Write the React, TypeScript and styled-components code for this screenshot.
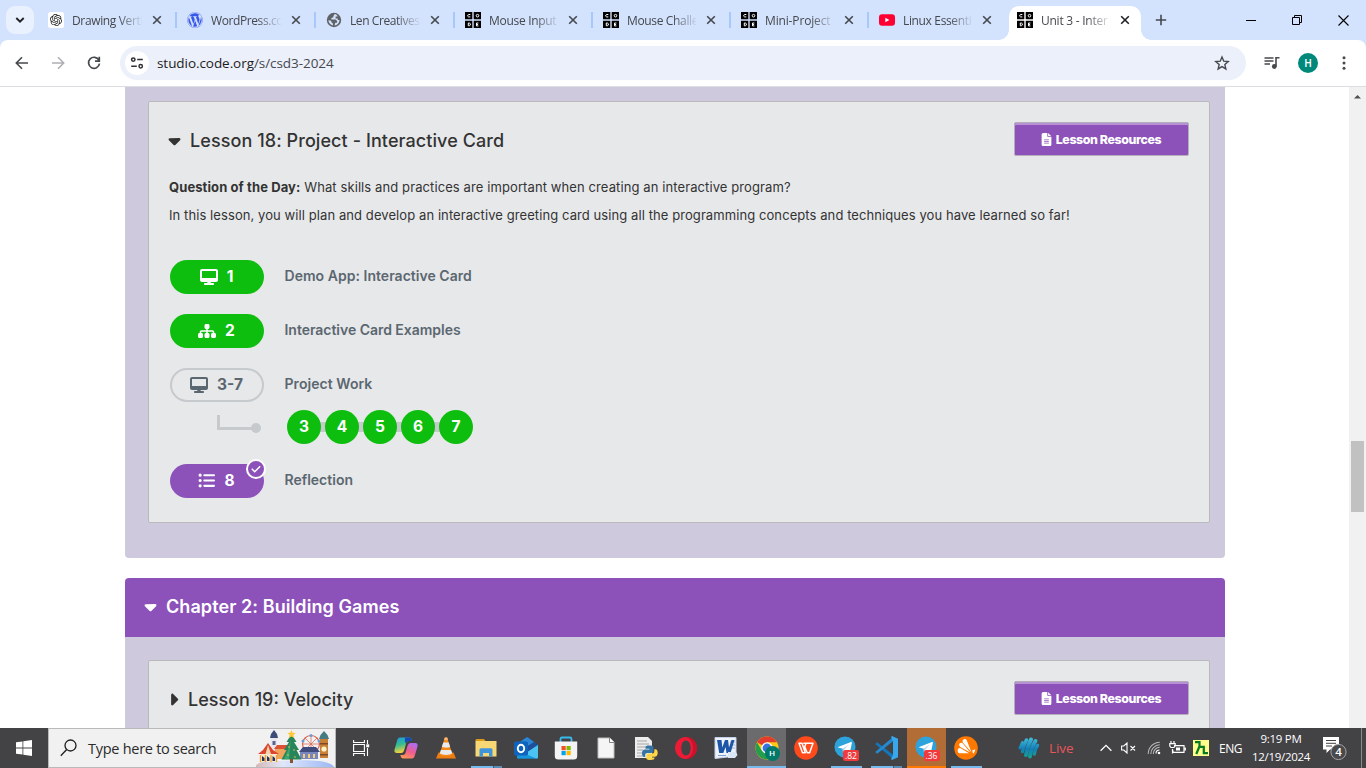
import React from "react";
import styled, { createGlobalStyle, css } from "styled-components";
import { FaWordpress } from "react-icons/fa";
import { FaDesktop, FaSitemap, FaListUl, FaFileLines, FaCaretDown, FaCaretRight } from "react-icons/fa6";
import { SiOpenai } from "react-icons/si";

const PURPLE = "#8c52ba";
const GREEN = "#0ebe0e";
const SLATE = "#5b6770";
const SYSTEM_FONT = `"Open Sans", "Noto Sans", sans-serif`;
const PAGE_FONT = `Inter, "Liberation Sans", sans-serif`;

const GlobalStyle = createGlobalStyle`
  * { box-sizing: border-box; }
  body { margin: 0; overflow: hidden; background: #fff; }
  svg { display: block; flex: none; }
`;

const Screen = styled.div`
  width: 1366px;
  height: 768px;
  display: flex;
  flex-direction: column;
  overflow: hidden;
  font-family: ${SYSTEM_FONT};
`;

/* ---------- Browser frame ---------- */

const TabStrip = styled.div`
  height: 40px;
  flex: none;
  display: flex;
  padding: 6px 0 0 6px;
  background: #d3e2fd;
`;

const TabSearch = styled.div`
  width: 28px;
  height: 28px;
  border-radius: 9px;
  background: #e9f0fe;
  display: grid;
  place-items: center;
  margin-right: 6px;
`;

const Tab = styled.div<{ $width: number; $active?: boolean }>`
  position: relative;
  width: ${(p) => p.$width}px;
  height: 34px;
  margin-right: 6px;
  padding: 0 11px 6px 8px;
  display: flex;
  align-items: center;
  flex: none;
  ${(p) =>
    p.$active
      ? css`
          margin-right: 0;
          background: #fff;
          border-radius: 10px 10px 0 0;
          &::before,
          &::after {
            content: "";
            position: absolute;
            bottom: 0;
            width: 10px;
            height: 10px;
          }
          &::before {
            left: -10px;
            background: radial-gradient(circle at 0 0, transparent 9.5px, #fff 10px);
          }
          &::after {
            right: -10px;
            background: radial-gradient(circle at 100% 0, transparent 9.5px, #fff 10px);
          }
        `
      : css`
          &::after {
            content: "";
            position: absolute;
            right: -4px;
            top: 6px;
            width: 2px;
            height: 16px;
            background: ${p.$width ? "#a8c7fa" : "transparent"};
          }
          &:nth-last-of-type(4)::after {
            background: transparent;
          }
        `}
`;

const TabTitle = styled.span<{ $spacing?: number }>`
  flex: 1;
  min-width: 0;
  margin: 1px 10px 0 8px;
  overflow: hidden;
  white-space: nowrap;
  font-size: 12px;
  line-height: 18px;
  letter-spacing: ${(p) => p.$spacing ?? 0}px;
  color: #45484d;
  mask-image: linear-gradient(90deg, #000 46px, transparent 71px);
`;

const NewTab = styled.div`
  width: 40px;
  height: 28px;
  display: grid;
  place-items: center;
`;

const WindowButtons = styled.div`
  margin-left: auto;
  display: flex;
  height: 28px;
`;

const WindowButton = styled.div`
  width: 46px;
  display: grid;
  place-items: center;
`;

const ToolbarBack = styled.div`
  flex: none;
  background: #d3e2fd;
`;

const Toolbar = styled.div`
  height: 47px;
  display: flex;
  align-items: center;
  padding: 0 4px;
  background: #fff;
  border-bottom: 1px solid #dcdde0;
  border-radius: 8px 8px 0 0;
`;

const ToolButton = styled.div`
  width: 36px;
  height: 34px;
  display: grid;
  place-items: center;
`;

const AddressBar = styled.div`
  width: 1126px;
  height: 34px;
  margin: 0 8px;
  padding: 0 16px 0 5px;
  border-radius: 17px;
  background: #ecf0fa;
  display: flex;
  align-items: center;
`;

const SiteInfo = styled.div`
  width: 24px;
  height: 24px;
  border-radius: 50%;
  background: #fff;
  display: grid;
  place-items: center;
  margin-right: 8px;
`;

const Address = styled.span`
  flex: 1;
  font-size: 13.5px;
  letter-spacing: -0.06px;
  color: #45484d;
  b {
    font-weight: 400;
    color: #1c1d20;
  }
`;

const Avatar = styled.div`
  width: 20px;
  height: 20px;
  border-radius: 50%;
  background: #00897b;
  color: #fff;
  display: grid;
  place-items: center;
  font: 500 10px Roboto, sans-serif;
`;

/* ---------- Page ---------- */

const Viewport = styled.main`
  flex: 1;
  min-height: 0;
  display: flex;
  overflow: hidden;
  background: #fff;
  font-family: ${PAGE_FONT};
`;

const Page = styled.div`
  width: 1349px;
  height: 641px;
  overflow: hidden;
  padding: 0 124px 0 125px;
`;

const ChapterBody = styled.section<{ $last?: boolean }>`
  padding: ${(p) => (p.$last ? "23px 15px 0 23px" : "14px 15px 35px 23px")};
  height: ${(p) => (p.$last ? "120px" : "471px")};
  margin-bottom: ${(p) => (p.$last ? 0 : 20)}px;
  background: #cec9dd;
  border-radius: 0 0 4px 4px;
`;

const ChapterHeader = styled.h2`
  margin: 0;
  height: 59px;
  padding: 0 19px 2px;
  display: flex;
  align-items: center;
  gap: 10px;
  background: ${PURPLE};
  color: #fff;
  border-radius: 4px 4px 0 0;
  font-size: 18px;
  font-weight: 600;
  letter-spacing: 0.08px;
`;

const LessonCard = styled.article<{ $height: number }>`
  height: ${(p) => p.$height}px;
  padding: 20px 20px 0 19px;
  border: 1px solid #b9b9bd;
  border-radius: 2px;
  background: #e7e8ea;
`;

const LessonHeader = styled.header`
  height: 34px;
  display: flex;
  align-items: center;
  justify-content: space-between;
`;

const LessonTitle = styled.h3<{ $spacing?: number }>`
  margin: 3px 0 0;
  display: flex;
  align-items: center;
  gap: 10px;
  font-size: 18px;
  font-weight: 500;
  letter-spacing: ${(p) => p.$spacing ?? 0}px;
  color: #333;
`;

const OpenCaret = styled(FaCaretDown)`
  width: 19px;
  height: 19px;
  margin: 0 -3.5px;
`;

const ClosedCaret = styled(FaCaretRight)`
  width: 19px;
  height: 19px;
  margin: 0 -5px 0 -4px;
`;

const ResourceButton = styled.button`
  width: 175px;
  height: 34px;
  padding: 0 2px 0 0;
  border: 1px solid #b3aeb9;
  border-radius: 2px;
  box-shadow: inset 0 2px 0 #b691d4;
  background: ${PURPLE};
  color: #fff;
  display: flex;
  align-items: center;
  justify-content: center;
  gap: 3px;
  font-family: ${PAGE_FONT};
  font-size: 12.4px;
  font-weight: 800;
  letter-spacing: -0.4px;
`;

const Description = styled.div`
  margin: 17px 0 31px 1px;
  display: grid;
  grid-auto-rows: 28px;
  align-items: center;
  white-space: nowrap;
  color: #333;
`;

const Paragraph = styled.p<{ $spacing: number }>`
  margin: 0;
  font-size: 13px;
  letter-spacing: ${(p) => p.$spacing}px;
  b {
    font-weight: 700;
  }
`;

const LevelRow = styled.div<{ $after?: number }>`
  display: flex;
  align-items: center;
  height: 34px;
  padding-left: 2px;
  margin-bottom: ${(p) => p.$after ?? 20}px;
`;

const Pill = styled.div<{ $kind: "done" | "open" | "survey" }>`
  position: relative;
  width: 94px;
  height: 34px;
  margin-right: 20.5px;
  padding: 0 1px 1px 0;
  border-radius: 17px;
  display: flex;
  align-items: center;
  justify-content: center;
  gap: 9px;
  font-size: 15.5px;
  font-weight: 700;
  color: ${(p) => (p.$kind === "open" ? SLATE : "#fff")};
  background: ${(p) => ({ done: GREEN, open: "transparent", survey: PURPLE })[p.$kind]};
  border: ${(p) => (p.$kind === "open" ? "2px solid #c6cacd" : "0")};
`;

const LevelName = styled.span<{ $spacing?: number }>`
  padding-bottom: 3px;
  font-size: 14px;
  font-weight: 600;
  letter-spacing: ${(p) => p.$spacing ?? 0}px;
  color: ${SLATE};
`;

const CheckBadge = styled.div`
  position: absolute;
  right: -2px;
  top: -5px;
  width: 20px;
  height: 20px;
  border-radius: 50%;
  border: 2px solid #fff;
  background: ${PURPLE};
  display: grid;
  place-items: center;
`;

const Branch = styled.div`
  width: 117px;
  padding: 0 0 6px 46px;
`;

const Bubbles = styled.div`
  display: flex;
  align-items: center;
`;

const Bubble = styled.div`
  width: 34px;
  height: 34px;
  border-radius: 50%;
  background: ${GREEN};
  color: #fff;
  display: grid;
  place-items: center;
  font-size: 15.5px;
  font-weight: 700;
  padding-bottom: 1px;
  z-index: 1;
`;

const BubbleLink = styled.div`
  width: 10px;
  height: 10px;
  margin: 0 -3px;
  background: #c6cacd;
`;

const ScrollBar = styled.div`
  width: 17px;
  flex: none;
  background: #f1f1f1;
  display: flex;
  flex-direction: column;
  align-items: center;
  padding-top: 7px;
`;

const ScrollThumb = styled.div`
  width: 13px;
  height: 71px;
  margin-top: 342px;
  background: #c1c1c1;
`;

/* ---------- Taskbar ---------- */

const TaskBar = styled.footer`
  height: 40px;
  flex: none;
  display: flex;
  background: #434245;
  color: #fff;
`;

const StartButton = styled.div`
  width: 48px;
  display: grid;
  place-items: center;
`;

const SearchBox = styled.div`
  width: 288px;
  height: 40px;
  padding-left: 11px;
  display: flex;
  align-items: center;
  background: #f1f1f1;
  border: 1px solid #b9b9b9;
  color: #2b2b2b;
  font-size: 14.5px;
  letter-spacing: -0.27px;
`;

const SearchLabel = styled.span`
  width: 168px;
  margin-left: 11px;
  flex: none;
  white-space: nowrap;
`;

const TaskSlot = styled.div<{ $width?: number; $tint?: string; $line?: "open" | "multi" | "active" | "alert" }>`
  width: ${(p) => p.$width ?? 40}px;
  display: grid;
  place-items: center;
  flex: none;
  padding-bottom: 1px;
  background: ${(p) => {
    const base = p.$tint ?? "transparent";
    if (p.$line === "open") return `linear-gradient(#76b9ed, #76b9ed) 5px 38px / 31px 2px no-repeat`;
    if (p.$line === "multi")
      return `linear-gradient(90deg, #76b9ed 22px, #3e5a73 22px, #3e5a73 23px, #5a8db4 23px) 5px 38px / 31px 2px no-repeat`;
    if (p.$line === "active") return `linear-gradient(#76b9ed, #76b9ed) 0 38px / 40px 2px no-repeat, ${base}`;
    if (p.$line === "alert") return `linear-gradient(#ff7800, #ff7800) 0 38px / 40px 2px no-repeat, ${base}`;
    return base;
  }};
  ${(p) => p.$tint && "border-left: 1px solid #434245;"}
`;

const IconStack = styled.div`
  position: relative;
  width: 24px;
  height: 24px;
`;

const CountBadge = styled.span`
  position: absolute;
  left: 9px;
  top: 14px;
  width: 16px;
  height: 11px;
  border-radius: 2px;
  background: #f03a3e;
  color: #fff;
  font-size: 8.5px;
  line-height: 11px;
  text-align: center;
`;

const ProfileBadge = styled.span`
  position: absolute;
  left: 10px;
  top: 10px;
  width: 15px;
  height: 15px;
  border-radius: 50%;
  background: #00796b;
  color: #fff;
  font: 500 8px/15px Roboto, sans-serif;
  text-align: center;
`;

const Tray = styled.div`
  margin-left: auto;
  width: 348px;
  display: flex;
  align-items: center;
`;

const Live = styled.span`
  width: 47px;
  margin-left: 9px;
  font-size: 13.5px;
  letter-spacing: -0.1px;
  color: #e8565c;
`;

const TrayItem = styled.div<{ $width: number }>`
  width: ${(p) => p.$width}px;
  display: grid;
  place-items: center;
  flex: none;
`;

const Language = styled.span`
  width: 33px;
  text-align: center;
  font-size: 12px;
  letter-spacing: -0.4px;
`;

const Clock = styled.div`
  width: 68px;
  text-align: center;
  font-size: 11.5px;
  line-height: 18px;
  letter-spacing: -0.3px;
  white-space: nowrap;
`;

const ShowDesktop = styled.div`
  width: 5px;
  height: 40px;
  margin-left: auto;
  border-left: 1px solid #8a898b;
`;

/* ---------- Icons ---------- */

const Cross = ({ color = "#45484d" }: { color?: string }) => (
  <svg width="10" height="10" viewBox="0 0 10 10" stroke={color} strokeWidth="1.6">
    <path d="M1.2 1.2l7.6 7.6M8.8 1.2L1.2 8.8" />
  </svg>
);

const CodeIcon = () => (
  <svg width="16" height="16" viewBox="0 0 16 16" fill="none">
    <path d="M0 0h7.300v7.300H0zM8.700 0H16v7.300H8.700zM0 8.700h7.300V16H0zM8.700 8.700H16V16H8.700z" fill="#000" />
    <g stroke="#fff" strokeWidth="1">
      <path d="M5.300 2.500H3.600l-.8.6v1.200l.8.600h1.700M3.300 11v2.800h1l1-.7v-1.400l-1-.7zM13.400 11h-1.900v2.900h1.900M11.500 12.450h1.600" />
      <circle cx="12.500" cy="3.700" r="1.300" />
    </g>
  </svg>
);

const GptIcon = () => (
  <svg width="16" height="16" viewBox="0 0 16 16">
    <rect width="16" height="16" rx="2.500" fill="#fff" />
    <SiOpenai x="2" y="2" size={12} color="#222" />
  </svg>
);

const GlobeIcon = () => (
  <svg width="16" height="16" viewBox="0 0 16 16">
    <circle cx="8" cy="8" r="7.200" fill="#5f6368" />
    <path d="M8.800 2.100L7.400 4v1.300L5.400 6v1.500h4.200l1.500 1.500v1.800H9.300l-.8 2.700c2.600-.2 5-2.500 5-5.500h-1.800V6.500H9.600V4.600h2.100c-.6-1.400-1.700-2.200-2.900-2.500zM2.400 8.300c.1 2.500 2 4.700 4.500 5.200v-1.900L5.200 10V8.800z" fill="#d3e2fd" />
  </svg>
);

const YoutubeIcon = () => (
  <svg width="16" height="16" viewBox="0 0 16 16">
    <rect y="2.300" width="16" height="11.400" rx="3" fill="#ff0033" />
    <path d="M6.300 5.700v4.600L10.400 8z" fill="#fff" />
  </svg>
);

const BackIcon = ({ color, flip }: { color: string; flip?: boolean }) => (
  <svg width="16" height="16" viewBox="0 0 16 16" fill="none" stroke={color} strokeWidth="1.6">
    <path d={flip ? "M2 8h11.500M8 2.300L13.700 8 8 13.700" : "M14 8H2.500M8 2.300L2.300 8 8 13.700"} />
  </svg>
);

const ReloadIcon = () => (
  <svg width="16" height="16" viewBox="0 0 16 16" fill="none" stroke="#45484d" strokeWidth="1.700">
    <path d="M12.900 5.100A5.500 5.500 0 1 0 13.500 8.700M13.300 1.800v4.300H9" />
  </svg>
);

const TuneIcon = () => (
  <svg width="14" height="14" viewBox="0 0 14 14" fill="none" stroke="#2f3135" strokeWidth="1.500">
    <circle cx="3.300" cy="3.600" r="1.700" />
    <circle cx="10.700" cy="10.200" r="1.700" />
    <path d="M7.200 3.600h5.600M1.200 10.200h5.600" />
  </svg>
);

const StarIcon = () => (
  <svg width="16" height="16" viewBox="0 0 16 16" fill="none" stroke="#45484d" strokeWidth="1.400">
    <path d="M8 2l1.750 4.150 4.500.4-3.400 3 1 4.400L8 11.600l-3.850 2.350 1-4.400-3.400-3 4.500-.4z" />
  </svg>
);

const MediaIcon = () => (
  <svg width="16" height="14" viewBox="0 0 16 14" fill="none" stroke="#45484d" strokeWidth="1.600">
    <path d="M.5 2h9M.5 5h9M.5 8h5.500M12 10.500V1.800h3.500" />
    <circle cx="10.300" cy="10.500" r="2.400" fill="#45484d" stroke="none" />
  </svg>
);

const WindowsLogo = () => (
  <svg width="16" height="16" viewBox="0 0 16 16" fill="#fff">
    <path d="M0 2.300l6.500-.9v6.200H0zM7.300 1.300L16 0v7.600H7.300zM0 8.400h6.500v6.200L0 13.700zM7.300 8.400H16V16l-8.700-1.300z" />
  </svg>
);

const FairIllustration = () => (
  <svg width="80" height="38" viewBox="1 0 80 38">
    <defs>
      <linearGradient id="snow" x2="1">
        <stop stopColor="#d6b7b4" />
        <stop offset=".35" stopColor="#dfe7fb" />
        <stop offset="1" stopColor="#9db8f5" />
      </linearGradient>
    </defs>
    <path d="M0 38c2-6 14-6 25-6 22-1 50-2 54 6z" fill="url(#snow)" />
    <g fill="none" stroke="#d9624c" strokeWidth="1.200">
      <circle cx="56" cy="15" r="8.500" />
      <path d="M56 6v18M47 15h18M50 9l12 12M62 9L50 21" strokeWidth=".7" />
    </g>
    <g fill="#6b9bd8">
      <circle cx="56" cy="6.500" r="1.500" /><circle cx="64" cy="12" r="1.500" /><circle cx="48" cy="12" r="1.500" />
    </g>
    <path d="M16 9h6v17h-6z" fill="#e8e6ee" />
    <path d="M15 9l1-4 3-4 3 4 1 4z" fill="#3d4c78" />
    <path d="M17.500 12h3v4h-3z" fill="#59658c" />
    <path d="M20 18h15v12H20z" fill="#f0a45c" />
    <path d="M19 20l3-4h12l3 4z" fill="#dd5135" />
    <path d="M45 22h18v8H45z" fill="#7986bd" />
    <path d="M44 23l4-5h13l4 5z" fill="#3f4a7d" />
    <path d="M48 25h2v4h-2zM53 25h2v4h-2zM58 25h2v4h-2z" fill="#f4cf79" />
    <path d="M65 9h8v20h-8z" fill="#c88036" />
    <path d="M64 10l1.500-4 3.500-4 3.500 4 1.500 4z" fill="#467b82" />
    <circle cx="69" cy="20" r="2.600" fill="#fff1c7" />
    <path d="M65 14h8v1.500h-8zM65 25h8v1.500h-8z" fill="#7c4829" />
    <path d="M6 25h16v8H6z" fill="#f7ead2" />
    <path d="M3 25l5-4 5-7 5 7 6 4z" fill="#dc4530" />
    <path d="M10.500 25l2.500-9 3 9z" fill="#f5d4a7" />
    <path d="M5.500 26v7M10.500 26v7M16 26v7M21.500 26v7" stroke="#f0a23a" strokeWidth="1.400" />
    <path d="M7 27l2.500 2v3H7zM12 27l2.500 2v3H12zM17.500 27l2.500 2v3h-2.500z" fill="#24305e" />
    <path d="M36.500 5l5 8h-2.500l5 8h-2.500l5 9.500H26.500l5-9.500H29l5-8h-2.500z" fill="#26855a" />
    <path d="M36 10l-2 20h-5l4-9z" fill="#3aa66b" />
    <path d="M35 30h3v4h-3z" fill="#85552d" />
    <path d="M36.500 1l1.200 2.800 3 .2-2.300 2 .8 3-2.700-1.600L33.800 9l.8-3-2.300-2 3-.2z" fill="#ffc83b" />
    <g fill="#e9c15a">
      <circle cx="34" cy="18" r=".8" /><circle cx="39" cy="21" r=".8" /><circle cx="33" cy="26" r=".8" /><circle cx="40" cy="28" r=".8" />
    </g>
  </svg>
);

const TaskViewIcon = () => (
  <svg width="17" height="16" viewBox="0 0 17 16" fill="none" stroke="#fff" strokeWidth="1.100">
    <path d="M.6 0v2.500h10.800V0M.6 4.500h10.800v7H.6zM.6 16v-2.500h10.800V16M14.500 0v4M14.500 8v8" />
    <path d="M13.200 4.300h3v3h-3z" fill="#fff" stroke="none" />
  </svg>
);

const CopilotIcon = () => (
  <svg width="24" height="24" viewBox="0 0 24 24">
    <defs>
      <linearGradient id="copA" x2=".3" y2="1">
        <stop stopColor="#1b9be8" /><stop offset=".5" stopColor="#35bd8f" /><stop offset="1" stopColor="#ffd13c" />
      </linearGradient>
      <linearGradient id="copB" x1=".7" x2=".2" y2="1">
        <stop stopColor="#b06cf0" /><stop offset=".5" stopColor="#ef5d8d" /><stop offset="1" stopColor="#ff9a52" />
      </linearGradient>
    </defs>
    <path d="M6 1.500h9c2 0 2.500 1 3.200 3.500h-3.500c-1.700 0-2.200 1-2.700 2.700l-1.700 6c-.6 2-1.500 3.300-3.500 3.300H3c-2.400 0-3-1.500-2.400-3.800L3 5c.6-2 1.300-3.500 3-3.500z" fill="url(#copA)" />
    <path d="M11 1.500h4c2 0 2.500 1 3.200 3.500h-3.500C13 5 12.500 6 12 7.700L10.800 5z" fill="#1748b8" />
    <path d="M18 22.500H9.500c-2 0-2.500-1-3.200-3.500H9c1.700 0 2.200-1 2.700-2.700l1.700-6c.6-2 1.500-3.300 3.500-3.300H21c2.400 0 3 1.500 2.400 3.800L21 19c-.6 2-1.300 3.500-3 3.500z" fill="url(#copB)" />
  </svg>
);

const VlcIcon = () => (
  <svg width="22" height="24" viewBox="0 0 22 24">
    <path d="M3.500 16.500h15l2.500 6H1z" fill="#ef7c10" />
    <path d="M9.800 1.500h2.400l5.300 17.300c-3 2.300-10 2.300-13 0z" fill="#f58a1c" />
    <path d="M8.300 6.500h5.400l1.400 4.300c-2 1.200-6.200 1.200-8.200 0zM5.900 14h10.200l1.100 3.600c-3 1.800-9.400 1.800-12.400 0z" fill="#e9eaec" />
    <path d="M9.800 1.500h2.400l.8 2.500H9z" fill="#f7b77b" />
  </svg>
);

const FolderIcon = () => (
  <svg width="24" height="24" viewBox="0 0 24 24">
    <path d="M1.500 4.500c0-1 .5-1.500 1.500-1.500h7l1.500 2h-10z" fill="#d99a18" />
    <path d="M1.500 5h21v15.500h-21z" fill="#f8d775" />
    <path d="M5.500 20.500V14c0-1 .6-1.700 1.600-1.700h9.800c1 0 1.600.7 1.600 1.700v6.500h-3.500V17H9v3.500z" fill="#3f95dc" />
  </svg>
);

const OutlookIcon = () => (
  <svg width="26" height="24" viewBox="0 0 26 24">
    <path d="M4 9l11-7.500L25 9v12c0 1-.7 1.500-1.500 1.500h-18C4.500 22.500 4 22 4 21z" fill="#1a7fd0" />
    <path d="M14 1.500h1L25 9l-9 7-8-7z" fill="#1d4f9c" />
    <path d="M6 6.500l8-5.500 7 5-8 5z" fill="#2b86d6" />
    <path d="M25 9v12c0 1-.5 1.500-1.500 1.500L8 20z" fill="#4bc4f2" />
    <path d="M4 14l19 8.500H5.500C4.500 22.500 4 22 4 21z" fill="#1698dc" />
    <rect x="1" y="5.500" width="14" height="14" rx="1.500" fill="#0f63bd" />
    <ellipse cx="8" cy="12.500" rx="3.200" ry="3.700" fill="none" stroke="#fff" strokeWidth="1.900" />
  </svg>
);

const StoreIcon = () => (
  <svg width="24" height="24" viewBox="0 0 24 24">
    <path d="M6.500 6V3c0-1 .5-1.500 1.500-1.500h8c1 0 1.500.5 1.500 1.500v3" fill="none" stroke="#38b9ee" strokeWidth="1.800" />
    <path d="M.8 5.500h22.400V20c0 2.500-1 3.500-3.500 3.500H4.300C1.800 23.500.8 22.500.8 20z" fill="#f4f4f5" />
    <path d="M7.500 10h4.200v4.200H7.500z" fill="#f25022" />
    <path d="M12.500 10h4.200v4.200h-4.200z" fill="#7fba00" />
    <path d="M7.500 15h4.200v4.200H7.500z" fill="#00a4ef" />
    <path d="M12.500 15h4.200v4.200h-4.200z" fill="#ffb900" />
  </svg>
);

const FileIcon = () => (
  <svg width="18" height="24" viewBox="0 0 18 24">
    <path d="M1 2h12l4 4v16H1z" fill="#f5f5f5" stroke="#bdbdbd" />
    <path d="M12.500 2v4.500H17" fill="#fff" stroke="#858585" />
  </svg>
);

const PythonIcon = () => (
  <svg width="26" height="24" viewBox="0 0 26 24">
    <path d="M2 1h13l4 4v17H2z" fill="#ededed" />
    <path d="M4 5h10M4 8h12M4 11h9M4 14h6M4 17h5M4 20h6" stroke="#a5a5a5" />
    <path d="M16 9.500c3 0 4.500.3 4.500 2.200v3.100c0 1.500-1 2.200-2.500 2.200h-3.500c-1.500 0-2.300.8-2.300 2.200V21h-.9c-1.500 0-2.300-1.500-2.300-3.800 0-2.400 1.200-3.600 3-3.600h4.500v-.8h-4v-1.300c0-1.500 1-2 3.500-2z" fill="#3673a5" />
    <path d="M17.500 24c-3 0-4.200-.6-4.200-2v-2.500c0-1.300.8-2 2.200-2H19c1.500 0 2.300-.8 2.300-2.200v-2h1c1.700 0 2.400 1.500 2.400 3.800 0 2.400-1.200 3.600-3 3.600h-4v.8h3.800v.6c0 1.500-1.200 1.900-4 1.900z" fill="#ffd545" />
  </svg>
);

const OperaIcon = () => (
  <svg width="24" height="24" viewBox="0 0 24 24">
    <path fillRule="evenodd" d="M12 1a11 11 0 1 0 0 22 11 11 0 1 0 0-22zm0 3.500c3 0 4.700 3.500 4.700 7.500s-1.700 7.500-4.700 7.500S7.300 16 7.300 12 9 4.500 12 4.500z" fill="#ed1b35" />
    <path d="M12 1a11 11 0 0 1 0 22c2-.4 7-4 7-11S14 1.400 12 1z" fill="#b90d27" opacity=".65" />
  </svg>
);

const WordIcon = () => (
  <svg width="24" height="24" viewBox="0 0 24 24">
    <path d="M1 1.500h21V20L1 22.500z" fill="#eef3fb" stroke="#c3d1e8" />
    <path d="M16 6h5M17 9h4M17 12h4" stroke="#9ab2da" />
    <path d="M3 4h4.500l.8 7.500L11 4h3l1 7.500L17.500 4h3L16.500 17h-4l-.9-6-2.300 6H5.200z" fill="#1d56a7" />
    <path d="M14 16h8l1.500 3L21 22h-7z" fill="#dbe6f7" />
    <path d="M4 19.500h8" stroke="#7f9fd1" />
  </svg>
);

const ChromeIcon = () => (
  <svg width="24" height="24" viewBox="0 0 24 24">
    <circle cx="12" cy="12" r="11.500" fill="#fbc916" />
    <path d="M12 12L2 6.300A11.500 11.500 0 0 1 22 6.300H12z" fill="#e33b2e" />
    <path d="M2 6.300A11.500 11.500 0 0 0 12 23.500l5-8.600L12 12 7 14.900z" fill="#249d4c" />
    <circle cx="12" cy="12" r="5.700" fill="#fff" />
    <circle cx="12" cy="12" r="4.400" fill="#3874e0" />
  </svg>
);

const WpsIcon = () => (
  <svg width="24" height="24" viewBox="0 0 24 24">
    <circle cx="12" cy="12" r="11.800" fill="#ff4a1c" />
    <path d="M5 7.200h3l3.300 9.600H8.500zM9.300 7.200h2.500M10.500 11.200l1.600-4h6.900l-3.400 9.600h-2.400l-2.500-6" fill="none" stroke="#fff" strokeWidth="1.500" strokeLinejoin="round" />
  </svg>
);

const TelegramIcon = () => (
  <svg width="22" height="22" viewBox="0 0 24 24">
    <circle cx="12" cy="12" r="11.500" fill="#2da3dc" />
    <path d="M4.500 12l14-5.500c.8-.3 1.200.2 1 1L17.300 18c-.2.900-.8 1-1.500.6l-3.300-2.500-1.900 1.800c-.5.4-.9.200-.9-.5l-.2-3.500L4.600 12.600c-.5-.2-.5-.4-.1-.6z" fill="#fff" />
    <path d="M9.500 13.900l7-5-5.500 6.200-.4 2.800z" fill="#b7d5e8" />
  </svg>
);

const VsCodeIcon = () => (
  <svg width="25" height="24" viewBox="0 0 25 24">
    <path d="M1.200 8l2-1.700L19 18.800v4.200z" fill="#1477bb" />
    <path d="M1.200 16l2 1.700L19 5.200V1z" fill="#2489ce" />
    <path d="M18 0l6 2.700v18.600L18 24l-1-1 2-4V5l-2-4z" fill="#38a7ee" />
  </svg>
);

const AvastIcon = () => (
  <svg width="24" height="24" viewBox="0 0 24 24">
    <circle cx="12" cy="12" r="11.800" fill="#ff7800" />
    <g fill="#fff">
      <path d="M9.800 3.200c1.300-.5 2.500 0 3 1.300l4.700 11.700L9 6.700c-1-1.200-.5-2.900.8-3.500z" />
      <path d="M5.600 7.600c.9-1 2.200-1 3.300 0l7.300 8.900-9.500-5.300c-1.500-.8-2-2.400-1.100-3.600z" />
      <path d="M3.800 13.700c.4-1.300 1.500-1.900 2.900-1.400l8.300 4.900H5.800c-1.600 0-2.500-1.700-2-3.500z" />
      <path d="M18.300 14.200l3-1c-.3 2-1.100 3.400-2.300 4.600z" />
    </g>
  </svg>
);

const CricketIcon = () => (
  <svg width="22" height="22" viewBox="0 0 22 22">
    <defs>
      <linearGradient id="ball" x2="0" y2="22" gradientUnits="userSpaceOnUse">
        <stop stopColor="#45c0dc" /><stop offset=".55" stopColor="#1280b8" /><stop offset="1" stopColor="#17a68a" />
      </linearGradient>
    </defs>
    <g fill="none" stroke="url(#ball)" strokeLinecap="round">
      <path d="M4.500 5.500L2 11" strokeWidth="3" />
      <path d="M8.500 3Q5.500 8 4.500 14.500" strokeWidth="3.500" />
      <path d="M13 2.500Q9.500 9 8 18" strokeWidth="4" />
      <path d="M17.500 4Q13 11 12 19.500" strokeWidth="4" />
      <path d="M19.500 8.500Q17 12 16.300 17" strokeWidth="3.500" />
    </g>
  </svg>
);

const NotificationIcon = () => (
  <svg width="26" height="26" viewBox="0 0 26 26">
    <path d="M2 2h16v12.500H9L5.500 18v-3.500H2z" fill="#fff" />
    <path d="M5 5.500h10M5 8.300h10M5 11h6" stroke="#434245" />
    <circle cx="17.500" cy="17" r="7.600" fill="#4a494c" stroke="#a5a5a6" />
    <text x="17.500" y="21.300" textAnchor="middle" fontFamily="Open Sans, sans-serif" fontSize="11.500" fontWeight="600" fill="#fff">4</text>
  </svg>
);

/* ---------- Composition ---------- */

const tabs: { title: string; icon: React.ReactNode; spacing: number; width: number }[] = [
  { title: "Drawing Verti", icon: <GptIcon />, spacing: -0.35, width: 133 },
  { title: "WordPress.co", icon: <FaWordpress size={16} color="#3858e9" />, spacing: -0.4, width: 133 },
  { title: "Len Creatives", icon: <GlobeIcon />, spacing: -0.42, width: 133 },
  { title: "Mouse Input", icon: <CodeIcon />, spacing: -0.3, width: 132 },
  { title: "Mouse Challe", icon: <CodeIcon />, spacing: -0.35, width: 132 },
  { title: "Mini-Project", icon: <CodeIcon />, spacing: -0.15, width: 132 },
  { title: "Linux Essenti", icon: <YoutubeIcon />, spacing: -0.35, width: 132 },
  { title: "Unit 3 - Inter", icon: <CodeIcon />, spacing: -0.25, width: 132 },
];

const Resources = () => (
  <ResourceButton>
    <FaFileLines size={13} />
    Lesson Resources
  </ResourceButton>
);

export default function App() {
  return (
    <Screen>
      <GlobalStyle />
      <TabStrip>
        <TabSearch>
          <svg width="10" height="8" viewBox="0 0 10 8" fill="none" stroke="#202124" strokeWidth="1.900">
            <path d="M1.300 2L5 5.700 8.700 2" />
          </svg>
        </TabSearch>
        {tabs.map((tab, i) => (
          <Tab key={tab.title} $width={tab.width} $active={i === tabs.length - 1}>
            {tab.icon}
            <TabTitle $spacing={tab.spacing}>{tab.title}</TabTitle>
            <Cross color={i === tabs.length - 1 ? "#202124" : undefined} />
          </Tab>
        ))}
        <NewTab>
          <svg width="12" height="12" viewBox="0 0 12 12" stroke="#45484d" strokeWidth="1.600">
            <path d="M6 .8v10.400M.8 6h10.400" />
          </svg>
        </NewTab>
        <WindowButtons>
          <WindowButton>
            <svg width="10" height="10" viewBox="0 0 10 10" stroke="#000"><path d="M0 5.500h10" /></svg>
          </WindowButton>
          <WindowButton>
            <svg width="10" height="10" viewBox="0 0 10 10" stroke="#000" fill="none">
              <path d="M.5 2.500h7v7h-7zM2.500 2.500v-2h7v7h-2" />
            </svg>
          </WindowButton>
          <WindowButton>
            <svg width="11" height="11" viewBox="0 0 11 11" stroke="#000" strokeWidth="1.100"><path d="M.5.5l10 10M10.500.5l-10 10" /></svg>
          </WindowButton>
        </WindowButtons>
      </TabStrip>
      <ToolbarBack>
        <Toolbar>
          <ToolButton><BackIcon color="#45484d" /></ToolButton>
          <ToolButton><BackIcon color="#aeb0b3" flip /></ToolButton>
          <ToolButton><ReloadIcon /></ToolButton>
          <AddressBar>
            <SiteInfo><TuneIcon /></SiteInfo>
            <Address><b>studio.code.org</b>/s/csd3-2024</Address>
            <StarIcon />
          </AddressBar>
          <ToolButton><MediaIcon /></ToolButton>
          <ToolButton><Avatar>H</Avatar></ToolButton>
          <ToolButton>
            <svg width="4" height="14" viewBox="0 0 4 14" fill="#45484d">
              <circle cx="2" cy="1.800" r="1.500" /><circle cx="2" cy="7" r="1.500" /><circle cx="2" cy="12.200" r="1.500" />
            </svg>
          </ToolButton>
        </Toolbar>
      </ToolbarBack>

      <Viewport>
        <Page>
          <ChapterBody>
            <LessonCard $height={422}>
              <LessonHeader>
                <LessonTitle $spacing={0.08}>
                  <OpenCaret />
                  Lesson 18: Project - Interactive Card
                </LessonTitle>
                <Resources />
              </LessonHeader>
              <Description>
                <Paragraph $spacing={0.1}>
                  <b>Question of the Day:</b> What skills and practices are important when creating an interactive program?
                </Paragraph>
                <Paragraph $spacing={0.083}>
                  In this lesson, you will plan and develop an interactive greeting card using all the programming concepts and techniques you have learned so far!
                </Paragraph>
              </Description>
              <LevelRow>
                <Pill $kind="done"><FaDesktop size={18} />1</Pill>
                <LevelName $spacing={0.03}>Demo App: Interactive Card</LevelName>
              </LevelRow>
              <LevelRow>
                <Pill $kind="done"><FaSitemap size={18} />2</Pill>
                <LevelName $spacing={-0.03}>Interactive Card Examples</LevelName>
              </LevelRow>
              <LevelRow $after={8}>
                <Pill $kind="open"><FaDesktop size={18} />3-7</Pill>
                <LevelName $spacing={0.05}>Project Work</LevelName>
              </LevelRow>
              <LevelRow>
                <Branch>
                  <svg width="46" height="20" viewBox="0 0 46 20" fill="none" stroke="#c6cacd" strokeWidth="3">
                    <path d="M2.500 1v13.500H36" />
                    <circle cx="40" cy="14" r="5" fill="#c6cacd" stroke="none" />
                  </svg>
                </Branch>
                <Bubbles>
                  {[3, 4, 5, 6, 7].map((n, i) => (
                    <React.Fragment key={n}>
                      {i > 0 && <BubbleLink />}
                      <Bubble>{n}</Bubble>
                    </React.Fragment>
                  ))}
                </Bubbles>
              </LevelRow>
              <LevelRow>
                <Pill $kind="survey">
                  <FaListUl size={17} />8
                  <CheckBadge>
                    <svg width="10" height="8" viewBox="0 0 10 8" fill="none" stroke="#fff" strokeWidth="1.500">
                      <path d="M.8 3.800l2.900 2.900L9.200 1.200" />
                    </svg>
                  </CheckBadge>
                </Pill>
                <LevelName>Reflection</LevelName>
              </LevelRow>
            </LessonCard>
          </ChapterBody>
          <ChapterHeader>
            <OpenCaret />
            Chapter 2: Building Games
          </ChapterHeader>
          <ChapterBody $last>
            <LessonCard $height={160}>
              <LessonHeader>
                <LessonTitle>
                  <ClosedCaret />
                  Lesson 19: Velocity
                </LessonTitle>
                <Resources />
              </LessonHeader>
            </LessonCard>
          </ChapterBody>
        </Page>
        <ScrollBar>
          <svg width="7" height="5" viewBox="0 0 7 5" fill="#505050"><path d="M0 4.500L3.500 1 7 4.500z" /></svg>
          <ScrollThumb />
        </ScrollBar>
      </Viewport>

      <TaskBar>
        <StartButton><WindowsLogo /></StartButton>
        <SearchBox>
          <svg width="17" height="18" viewBox="0 0 17 18" fill="none" stroke="#1f1f1f" strokeWidth="1.300">
            <circle cx="10.500" cy="6.500" r="5.500" />
            <path d="M6.700 10.500L.8 16.800" />
          </svg>
          <SearchLabel>Type here to search</SearchLabel>
          <FairIllustration />
        </SearchBox>
        <TaskSlot $width={50}><TaskViewIcon /></TaskSlot>
        <TaskSlot><CopilotIcon /></TaskSlot>
        <TaskSlot><VlcIcon /></TaskSlot>
        <TaskSlot $line="multi"><FolderIcon /></TaskSlot>
        <TaskSlot><OutlookIcon /></TaskSlot>
        <TaskSlot><StoreIcon /></TaskSlot>
        <TaskSlot><FileIcon /></TaskSlot>
        <TaskSlot><PythonIcon /></TaskSlot>
        <TaskSlot><OperaIcon /></TaskSlot>
        <TaskSlot><WordIcon /></TaskSlot>
        <TaskSlot $line="active" $tint="#6b6a6c">
          <IconStack><ChromeIcon /><ProfileBadge>H</ProfileBadge></IconStack>
        </TaskSlot>
        <TaskSlot><WpsIcon /></TaskSlot>
        <TaskSlot $line="open"><IconStack><TelegramIcon /><CountBadge>.82</CountBadge></IconStack></TaskSlot>
        <TaskSlot $line="multi"><VsCodeIcon /></TaskSlot>
        <TaskSlot $line="alert" $tint="#b26c35"><IconStack><TelegramIcon /><CountBadge>.36</CountBadge></IconStack></TaskSlot>
        <TaskSlot $line="open"><AvastIcon /></TaskSlot>
        <Tray>
          <CricketIcon />
          <Live>Live</Live>
          <TrayItem $width={19}>
            <svg width="12" height="8" viewBox="0 0 12 8" fill="none" stroke="#fff" strokeWidth="1.300"><path d="M.6 6.700L6 1.300l5.400 5.400" /></svg>
          </TrayItem>
          <TrayItem $width={26}>
            <svg width="15" height="12" viewBox="0 0 15 12" fill="none" stroke="#fff" strokeWidth="1.100">
              <path d="M.6 4h2.200L6 1v10L2.800 8H.6zM9.500 4l4.500 4.500M14 4L9.500 8.500" />
            </svg>
          </TrayItem>
          <TrayItem $width={26}>
            <svg width="14" height="14" viewBox="0 0 14 14" fill="none" stroke="#fff" strokeWidth="1.100">
              <path d="M9 12.500a3.500 3.500 0 0 1 3.500-3.500" />
              <path d="M6.300 13a6.400 6.400 0 0 1 6.400-6.700M3.800 13a9.200 9.200 0 0 1 9-9.200M1.200 13A11.800 11.800 0 0 1 12.800 1.200" stroke="#b7b7b8" />
              <circle cx="12" cy="12" r="1.300" fill="#fff" stroke="none" />
            </svg>
          </TrayItem>
          <TrayItem $width={20}>
            <svg width="17" height="14" viewBox="0 0 17 14" fill="none" stroke="#fff" strokeWidth="1.200">
              <path d="M5 4.600h10v6.800H4V9.500M16.300 6.500v3M3.500 8v4.500M2 0v2.500M5 0v2.500M.8 2.600h5.400v2.300L5 6.500H2L.8 5z" />
              <path d="M7 6.500h4v3H7z" fill="#fff" stroke="none" />
            </svg>
          </TrayItem>
          <TrayItem $width={27}>
            <svg width="16" height="16" viewBox="0 0 16 16" fill="none" stroke="#087a23" strokeWidth="2.200">
              <rect width="16" height="16" fill="#ffff8c" stroke="none" />
              <path d="M2 2.200h4.500v4L3.300 14M6.500 6.800h4.300v6.300H15" />
            </svg>
          </TrayItem>
          <Language>ENG</Language>
          <Clock>9:19 PM<br />12/19/2024</Clock>
          <TrayItem $width={38}><NotificationIcon /></TrayItem>
          <ShowDesktop />
        </Tray>
      </TaskBar>
    </Screen>
  );
}
